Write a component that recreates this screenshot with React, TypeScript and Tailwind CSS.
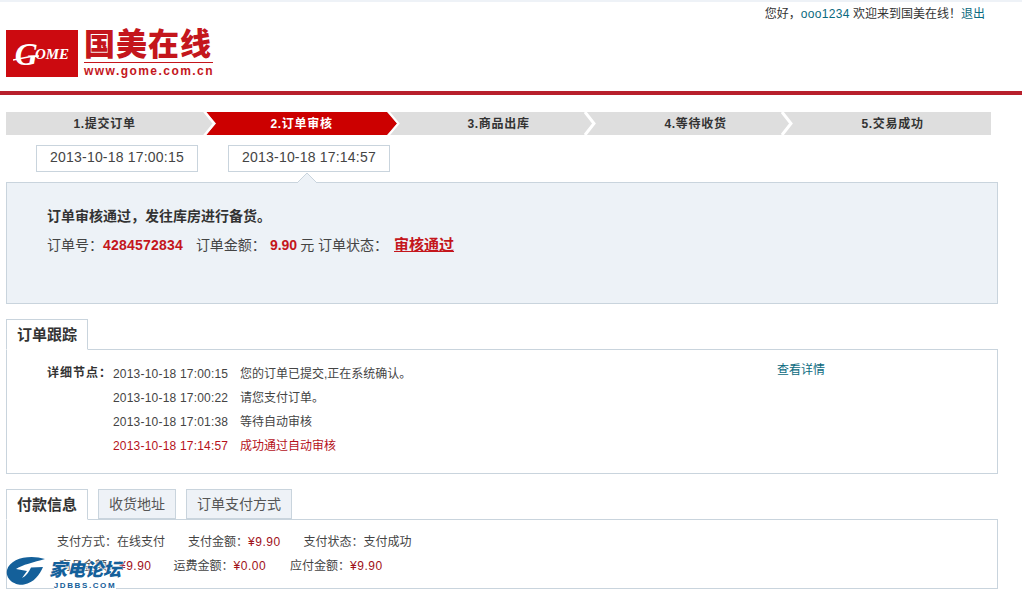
const cjk = "font-['Liberation_Sans','Noto_Sans_CJK_SC',sans-serif]";

const steps = [
  { label: "1.提交订单", active: false },
  { label: "2.订单审核", active: true },
  { label: "3.商品出库", active: false },
  { label: "4.等待收货", active: false },
  { label: "5.交易成功", active: false },
];

const Steps = () => (
  <div className="flex w-[985px] h-[23px] ml-1.5 bg-[#dedede] overflow-hidden">
    {steps.map((s, i) => (
      <div
        key={s.label}
        className={`relative flex-1 flex items-center justify-center text-xs font-bold tracking-[0.7px] ${
          s.active ? "text-white" : "text-[#333]"
        }`}
      >
        {s.active && (
          <svg className="absolute left-0 top-0 w-[200px] h-[23px] z-10 overflow-visible" viewBox="0 0 200 23">
            <path d="M3 0H184L194 11.5L184 23H3L13 11.5Z" fill="#cc0000" />
            <path d="M1 -1L11 11.5L1 24" fill="none" stroke="#fff" strokeWidth="2.5" />
            <path d="M185 -1L195.5 11.5L185 24" fill="none" stroke="#fff" strokeWidth="2" />
          </svg>
        )}
        {i < 4 && !s.active && i !== 0 && (
          <svg className="absolute -right-px top-0 w-3.5 h-[23px] z-10" viewBox="0 0 14 23">
            <path d="M1 0L10 11.5L1 23" fill="none" stroke="#fff" strokeWidth="3" />
          </svg>
        )}
        <span className="relative z-20">{s.label}</span>
      </div>
    ))}
  </div>
);

const Tab = ({ label, active }: { label: string; active?: boolean }) => (
  <div
    className={`px-2.5 flex items-center border border-[#c9d4dd] ${
      active
        ? "h-[31px] text-[15px] font-bold text-[#333] bg-white border-b-white -mb-px z-10"
        : "h-[30px] text-sm text-[#555] bg-[#eef2f7]"
    }`}
  >
    {label}
  </div>
);

const rows = [
  { t: "2013-10-18 17:00:15", m: "您的订单已提交,正在系统确认。" },
  { t: "2013-10-18 17:00:22", m: "请您支付订单。" },
  { t: "2013-10-18 17:01:38", m: "等待自动审核" },
  { t: "2013-10-18 17:14:57", m: "成功通过自动审核", red: true },
];

const App = () => {
  return (
    <div className={`relative w-[1022px] h-[592px] overflow-hidden bg-white text-xs text-[#333] ${cjk}`}>
      <div className="h-0.5 bg-[#eef2f7]" />
      <header className="h-[89px]">
        <div className="flex justify-end pr-[37px] pt-[4px] text-xs leading-[16px]">
          <span>
            您好，<span className="text-[#0b6a80] tracking-[0.3px]">ooo1234</span> 欢迎来到国美在线！
            <span className="text-[#0b6a80]">退出</span>
          </span>
        </div>
        <div className="flex items-start ml-1.5 mt-[8px] gap-[6px]">
          <div className="relative w-[72px] h-[47px] bg-[#cc0a10] flex items-center justify-center text-white italic font-bold font-['Liberation_Serif',serif]">
            <span className="text-[32px] leading-none">G</span>
            <span className="text-[15px] leading-none -ml-[3px] mt-[2px]">OME</span>
            <svg className="absolute left-[7px] top-[25px]" width="26" height="6" viewBox="0 0 26 6">
              <path d="M0 5C8 4 16 1 26 1" fill="none" stroke="#fff" strokeWidth="1.5" />
            </svg>
          </div>
          <div className="w-[129px] flex flex-col text-[#c4161c]">
            <div className="text-[31px] leading-[30px] font-black tracking-[1px] whitespace-nowrap">国美在线</div>
            <div className="border-t border-[#c4161c] mt-[2px] pt-[1px] text-[12px] leading-[14px] font-bold tracking-[1.45px] whitespace-nowrap">
              www.gome.com.cn
            </div>
          </div>
        </div>
      </header>
      <div className="h-1 bg-[#b8202c]" />

      <div className="mt-[17px]">
        <Steps />
      </div>

      <div className="flex gap-[30px] ml-9 mt-[10px]">
        {["2013-10-18 17:00:15", "2013-10-18 17:14:57"].map((t) => (
          <div
            key={t}
            className="w-[162px] h-[27px] pb-[3px] border border-[#c9d4dd] flex items-center justify-center text-sm tracking-[0.2px] text-[#444]"
          >
            {t}
          </div>
        ))}
      </div>

      <div className="relative mt-[10px] mx-1.5 w-[992px] h-[122px] bg-[#edf2f7] border border-[#c9d4dd] pl-10 pt-[23px]">
        <svg className="absolute left-[290px] -top-[11px] w-5 h-[11px]" viewBox="0 0 20 11">
          <path d="M0 11L10 1L20 11" fill="#edf2f7" stroke="#c9d4dd" />
        </svg>
        <div className="font-bold text-sm leading-5 text-[#333]">订单审核通过，发往库房进行备货。</div>
        <div className="flex items-center mt-[9px] text-sm leading-5 text-[#444] whitespace-nowrap">
          <span>订单号：</span>
          <span className="font-bold tracking-[0.2px] text-[#c4161c]">4284572834</span>
          <span className="ml-[13px]">订单金额：</span>
          <span className="ml-[4px] font-bold text-[#c4161c]">9.90</span>
          <span className="ml-[3px]">元 订单状态：</span>
          <span className="ml-[6px] text-[15px] font-bold text-[#c4161c] underline">审核通过</span>
        </div>
      </div>

      <section className="mt-[15px] mx-1.5 w-[992px]">
        <div className="flex">
          <Tab label="订单跟踪" active />
        </div>
        <div className="relative h-[125px] border border-[#c9d4dd] flex pl-10 pt-[12px]">
          <div className="font-bold w-[66px] leading-[22px] tracking-[1px] whitespace-nowrap">详细节点：</div>
          <div>
            {rows.map((r) => (
              <div
                key={r.t}
                className={`flex h-6 items-center ${r.red ? "text-[#b5121b]" : "text-[#444]"}`}
              >
                <span className="w-[127px] tracking-[0.2px]">{r.t}</span>
                <span>{r.m}</span>
              </div>
            ))}
          </div>
          <span className="absolute left-[770px] top-[12px] text-[#0b6a80]">查看详情</span>
        </div>
      </section>

      <section className="mt-[15px] mx-1.5 w-[992px]">
        <div className="flex gap-[10px]">
          <Tab label="付款信息" active />
          <Tab label="收货地址" />
          <Tab label="订单支付方式" />
        </div>
        <div className="h-[70px] border border-[#c9d4dd] pt-2.5 text-[#444] whitespace-nowrap">
          <div className="flex h-6 items-center pl-[50px]">
            <span>支付方式：在线支付</span>
            <span className="ml-[23px]">
              支付金额：<span className="text-[#a01018] tracking-[0.5px]">¥9.90</span>
            </span>
            <span className="ml-[23px]">支付状态：支付成功</span>
          </div>
          <div className="flex h-6 items-center pl-[52px]">
            <span>
              商品金额：<span className="text-[#a01018] tracking-[0.5px]">¥9.90</span>
            </span>
            <span className="ml-[22px]">
              运费金额：<span className="text-[#a01018] tracking-[0.5px]">¥0.00</span>
            </span>
            <span className="ml-6">
              应付金额：<span className="text-[#a01018] tracking-[0.5px]">¥9.90</span>
            </span>
          </div>
        </div>
      </section>

      {/* forum watermark */}
      <div className="absolute left-[4px] top-[554px] flex items-start">
        <svg width="44" height="34" viewBox="0 0 44 34">
          <path
            d="M41 5C26 0 6 4 3 16C1 26 12 32 20 30.5C30 29 36 20 39 13L27 13.5C25 18 22 22 18 24L23 17L12 15C18 11 30 8 41 5Z"
            fill="#14609a"
          />
        </svg>
        <div className="ml-px flex flex-col items-center">
          <div className="text-[18px] leading-[24px] mt-[4px] font-black italic text-[#14609a] [text-shadow:0_0_2px_#fff,0_0_2px_#fff] whitespace-nowrap">
            家电论坛
          </div>
          <div className="text-[8px] leading-[8px] font-bold text-[#14609a] tracking-[1.6px] bg-white">JDBBS.COM</div>
        </div>
      </div>
    </div>
  );
};

export default App;
